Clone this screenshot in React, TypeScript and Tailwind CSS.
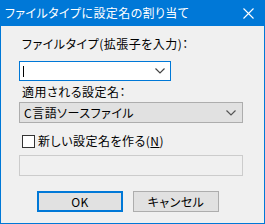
const font = "font-['Noto_Sans_CJK_JP','Noto_Sans',sans-serif] [font-feature-settings:'palt']";

const Chevron = ({ color }: { color: string }) => (
  <svg width="10" height="6" viewBox="0 0 10 6" className="shrink-0">
    <polyline points="0.5,0.5 5,5 9.5,0.5" fill="none" stroke={color} strokeWidth="1.2" />
  </svg>
);

export default function App() {
  return (
    <div className={`w-[265px] h-[224px] flex flex-col bg-[#f0f0f0] text-[12px] leading-[16px] text-black tracking-[0.5px] ${font}`}>
      <div className="h-[26px] bg-[#0078d7] flex items-center justify-between pl-[5px] pr-[11px] text-white shrink-0">
        <span className="tracking-[0.4px]">ファイルタイプに設定名の割り当て</span>
        <svg width="11" height="11" viewBox="0 0 11 11">
          <path d="M0.5 0.5 L10.5 10.5 M10.5 0.5 L0.5 10.5" stroke="white" strokeWidth="1.1" />
        </svg>
      </div>
      <div className="flex-1 flex flex-col border-x border-b border-[#0078d7] px-[18px]">
        <div className="mt-[10px] pl-[3px]">ファイルタイプ(拡張子を入力)：</div>
        <div className="mt-[9px] w-[152px] h-[20px] border border-[#0078d7] bg-white flex items-center justify-between pl-[3px] pr-[5px]">
          <div className="w-px h-[11px] bg-black" />
          <Chevron color="#444" />
        </div>
        <div className="mt-[3px] pl-[3px]">適用される設定名：</div>
        <div className="mt-[2px] w-[224px] h-[21px] border border-[#adadad] bg-[#e1e1e1] flex items-center justify-between pl-[4px] pr-[6px]">
          <span>C言語ソースファイル</span>
          <Chevron color="#555" />
        </div>
        <div className="mt-[10px] flex items-center pl-[3px] gap-[3px]">
          <div className="w-[13px] h-[13px] border border-[#333] bg-white" />
          <span>
            新しい設定名を作る(<span className="underline">N</span>)
          </span>
        </div>
        <div className="mt-[6px] w-[224px] h-[21px] border border-[#cccccc] bg-[#f0f0f0]" />
        <div className="mt-[15px] flex pl-[18px] gap-[10px]">
          <div className="w-[86px] h-[21px] border-2 border-[#0078d7] bg-[#e1e1e1] flex items-center justify-center">OK</div>
          <div className="w-[86px] h-[21px] border border-[#adadad] bg-[#e1e1e1] flex items-center justify-center">キャンセル</div>
        </div>
      </div>
    </div>
  );
}
